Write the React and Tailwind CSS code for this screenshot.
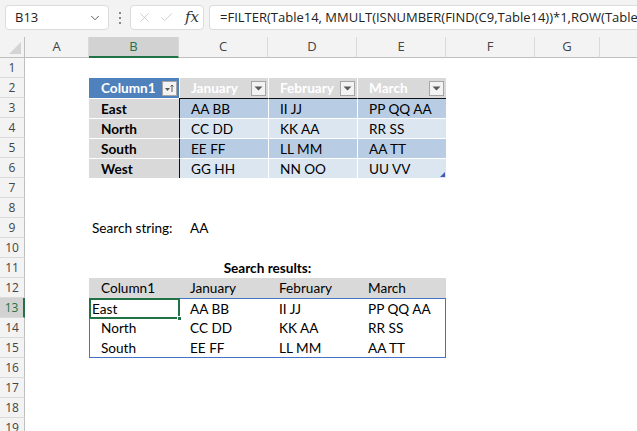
import React from 'react';
import { ChevronDown, X, Check } from 'lucide-react';

const COLS = ['A', 'B', 'C', 'D', 'E', 'F', 'G', 'H'];
const wCls = ['w-[64px]', 'w-[90px]', 'w-[89px]', 'w-[89px]', 'w-[89px]', 'w-[89px]', 'w-[65px]', 'w-[120px]'];

const Cell = ({ i, className = '', children }) => (
    <div className={`${wCls[i]} shrink-0 h-full flex items-center pt-[1px] whitespace-nowrap overflow-visible ${className}`}>
        {children}
    </div>
);

const Drop = ({ sort }) => (
    <div className="w-[15px] h-[15px] ml-auto mr-[2px] bg-[#f3f3f3] border border-[#a6a6a6] flex items-center justify-center">
        {sort ? (
            <svg width="11" height="11" viewBox="0 0 11 11">
                <path d="M1 5h5l-2.5 3z" fill="#595959" />
                <path d="M8 2v7M6.5 3.5L8 2l1.5 1.5" stroke="#595959" strokeWidth="1" fill="none" />
            </svg>
        ) : (
            <svg width="9" height="5" viewBox="0 0 9 5">
                <path d="M0.5 0.5h8L4.5 4.5z" fill="#595959" />
            </svg>
        )}
    </div>
);

const RowHead = ({ n, active }) => (
    <div
        className={`w-[25px] shrink-0 h-full flex items-center justify-center text-[12px] font-['Open_Sans'] border-b border-[#dadada] ${
            active ? 'bg-[#d2d2d2] text-[#217346] border-r-2 border-r-[#217346]' : 'bg-[#f3f3f3] text-[#444] border-r border-r-[#bfbfbf]'
        }`}
    >
        {n}
    </div>
);

const Row = ({ n, active, children }) => (
    <div className="flex h-[20px]">
        <RowHead n={n} active={active} />
        {children}
    </div>
);

const Empty = ({ from = 0 }) => COLS.slice(from).map((c, k) => <Cell key={c} i={from + k} />);

const tbl = [
    ['East', 'AA BB', 'II JJ', 'PP QQ AA'],
    ['North', 'CC DD', 'KK AA', 'RR SS'],
    ['South', 'EE FF', 'LL MM', 'AA TT'],
    ['West', 'GG HH', 'NN OO', 'UU VV'],
];

const res = [
    ['East', 'AA BB', 'II JJ', 'PP QQ AA'],
    ['North', 'CC DD', 'KK AA', 'RR SS'],
    ['South', 'EE FF', 'LL MM', 'AA TT'],
];

export default function App() {
    return (
        <div className="w-[637px] h-[431px] overflow-hidden bg-white text-[13.6px] text-black font-['Lato',sans-serif]">
            {/* formula bar */}
            <div className="h-[37px] bg-[#f3f3f3] flex items-start pt-[5px] pl-[5px] font-['Open_Sans',sans-serif]">
                <div className="w-[104px] h-[25px] bg-white border border-[#dcdcdc] rounded-[4px] flex items-center pl-[9px] pr-[6px] text-[13px] text-[#222]">
                    B13
                    <ChevronDown className="ml-auto w-[14px] h-[14px] text-[#555]" strokeWidth={1.6} />
                </div>
                <div className="w-[21px] h-[25px] flex flex-col items-center justify-center gap-[3px]">
                    <span className="w-[2px] h-[2px] bg-[#888]" />
                    <span className="w-[2px] h-[2px] bg-[#888]" />
                    <span className="w-[2px] h-[2px] bg-[#888]" />
                </div>
                <div className="w-[74px] h-[25px] bg-white border border-[#dcdcdc] rounded-[4px] flex items-center pl-[6px] gap-[7px]">
                    <X className="w-[15px] h-[15px] text-[#c4c4c4]" strokeWidth={1.3} />
                    <Check className="w-[15px] h-[15px] text-[#c4c4c4]" strokeWidth={1.3} />
                    <span className="ml-[4px] font-['DejaVu_Serif',serif] italic text-[15px] text-[#333] leading-none">fx</span>
                </div>
                <div className="ml-[5px] flex-1 h-[25px] bg-white border border-r-0 border-[#dcdcdc] rounded-l-[4px] flex items-center pl-[10px] text-[13px] text-[#222] whitespace-nowrap overflow-hidden">
                    =FILTER(Table14, MMULT(ISNUMBER(FIND(C9,Table14))*1,ROW(Table14)^0),0))
                </div>
            </div>

            {/* column headers */}
            <div className="flex h-[21px] font-['Open_Sans',sans-serif] text-[13px]">
                <div className="w-[25px] shrink-0 bg-[#f3f3f3] border-r border-b border-[#bfbfbf] flex items-end justify-end pr-[3px] pb-[3px]">
                    <svg width="12" height="12" viewBox="0 0 12 12">
                        <path d="M12 0V12H0z" fill="#d4d4d4" />
                    </svg>
                </div>
                {COLS.map((c, i) => (
                    <div
                        key={c}
                        className={`${wCls[i]} shrink-0 flex items-center justify-center border-r border-[#dadada] ${
                            c === 'B' ? 'bg-[#d2d2d2] text-[#217346] border-b-2 border-b-[#217346]' : 'bg-[#f3f3f3] text-[#444] border-b border-b-[#bfbfbf]'
                        }`}
                    >
                        {c}
                    </div>
                ))}
            </div>

            <Row n={1}><Empty /></Row>

            {/* table header */}
            <Row n={2}>
                <Cell i={0} />
                <Cell i={1} className="bg-[#4f81bd] text-white font-bold pl-[12px]">
                    Column1<Drop sort />
                </Cell>
                {['January', 'February', 'March'].map((h, k) => (
                    <Cell key={h} i={2 + k} className="bg-[#d9d9d9] text-white font-bold pl-[11px] border-l border-white">
                        {h}<Drop />
                    </Cell>
                ))}
                <Empty from={5} />
            </Row>

            {tbl.map((r, j) => (
                <Row key={r[0]} n={3 + j}>
                    <Cell i={0} />
                    <Cell i={1} className="bg-[#d9d9d9] font-bold pl-[12px] border-t border-white">{r[0]}</Cell>
                    {r.slice(1).map((v, k) => (
                        <Cell
                            key={k}
                            i={2 + k}
                            className={`relative pl-[11px] ${j % 2 ? 'bg-[#dce6f1]' : 'bg-[#b8cce4]'} ${
                                j === 0 ? 'border-t border-t-[#111]' : 'border-t border-t-white'
                            } ${k === 0 ? 'border-l border-l-[#111]' : 'border-l border-l-white'}`}
                        >
                            {v}
                            {j === 3 && k === 2 && (
                                <svg className="absolute right-[1px] bottom-[1px]" width="5" height="5" viewBox="0 0 5 5">
                                    <path d="M5 0V5H0z" fill="#3d5bb8" />
                                </svg>
                            )}
                        </Cell>
                    ))}
                    <Empty from={5} />
                </Row>
            ))}

            <Row n={7}><Empty /></Row>
            <Row n={8}><Empty /></Row>
            <Row n={9}>
                <Cell i={0} />
                <Cell i={1} className="pl-[3px]">Search string:</Cell>
                <Cell i={2} className="pl-[11px]">AA</Cell>
                <Empty from={3} />
            </Row>
            <Row n={10}><Empty /></Row>
            <Row n={11}>
                <Cell i={0} />
                <div className="w-[357px] shrink-0 flex items-center justify-center pt-[1px] font-bold">Search results:</div>
                <Empty from={5} />
            </Row>
            <Row n={12}>
                <Cell i={0} />
                <Cell i={1} className="bg-[#d9d9d9] pl-[12px]">Column1</Cell>
                <Cell i={2} className="bg-[#d9d9d9] pl-[11px]">January</Cell>
                <Cell i={3} className="bg-[#d9d9d9] pl-[11px]">February</Cell>
                <Cell i={4} className="bg-[#d9d9d9] pl-[11px]">March</Cell>
                <Empty from={5} />
            </Row>
            {res.map((r, j) => (
                <Row key={r[0]} n={13 + j} active={j === 0}>
                    <Cell i={0} />
                    <Cell
                        i={1}
                        className={`relative border-l border-l-[#4472c4] ${j === 0 ? 'pl-[2px] border-t border-t-[#4472c4]' : 'pl-[11px]'} ${
                            j === 2 ? 'border-b border-b-[#4472c4]' : ''
                        }`}
                    >
                        {r[0]}
                        {j === 0 && (
                            <>
                                <div className="absolute left-[-1px] top-[-1px] w-[91px] h-[21px] border-2 border-[#217346]" />
                                <div className="absolute right-[-3px] bottom-[-3px] w-[5px] h-[5px] bg-[#217346] border border-white" />
                            </>
                        )}
                    </Cell>
                    {r.slice(1).map((v, k) => (
                        <Cell
                            key={k}
                            i={2 + k}
                            className={`pl-[11px] ${j === 0 ? 'border-t border-t-[#4472c4]' : ''} ${j === 2 ? 'border-b border-b-[#4472c4]' : ''} ${
                                k === 2 ? 'border-r border-r-[#4472c4]' : ''
                            }`}
                        >
                            {v}
                        </Cell>
                    ))}
                    <Empty from={5} />
                </Row>
            ))}
            {[16, 17, 18, 19].map((n) => (
                <Row key={n} n={n}><Empty /></Row>
            ))}
        </div>
    );
}
